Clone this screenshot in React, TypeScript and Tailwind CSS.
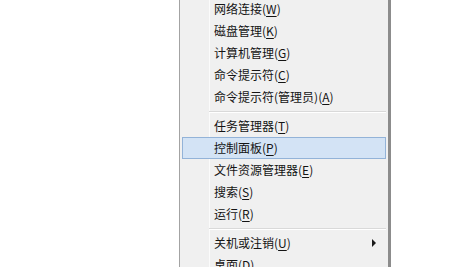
type MenuItem = {
    label: string;
    key: string;
    active?: boolean;
    submenu?: boolean;
};

type Entry = MenuItem | 'sep';

const entries: Entry[] = [
    { label: '网络连接', key: 'W' },
    { label: '磁盘管理', key: 'K' },
    { label: '计算机管理', key: 'G' },
    { label: '命令提示符', key: 'C' },
    { label: '命令提示符(管理员)', key: 'A' },
    'sep',
    { label: '任务管理器', key: 'T' },
    { label: '控制面板', key: 'P', active: true },
    { label: '文件资源管理器', key: 'E' },
    { label: '搜索', key: 'S' },
    { label: '运行', key: 'R' },
    'sep',
    { label: '关机或注销', key: 'U', submenu: true },
    { label: '桌面', key: 'D' },
];

const Row = ({ item }: { item: MenuItem }) => {
    return (
        <div
            className={
                item.active
                    ? 'flex h-[22px] items-center border border-[#93b3d8] bg-[#d3e3f5] pl-[31px]'
                    : 'flex h-[22px] items-center border border-transparent pl-[31px]'
            }
        >
            <span className="whitespace-nowrap text-[12px] leading-none text-[#141414]">
                {item.label}(<span className="underline underline-offset-2">{item.key}</span>)
            </span>
            {item.submenu && (
                <span className="ml-auto mr-[9px] h-0 w-0 border-y-[4px] border-l-[4px] border-y-transparent border-l-[#1a1a1a]" />
            )}
        </div>
    );
};

export default function App() {
    return (
        <div
            className="flex h-[267px] w-[466px] overflow-hidden bg-white"
            style={{ fontFamily: '"Noto Sans CJK SC", "Noto Sans", sans-serif' }}
        >
            <div className="w-[179px] shrink-0" />
            <div className="relative -mt-[2px] w-[212px] shrink-0 self-start border-l border-r-[3px] border-l-[#a3a3a3] border-r-[#8c8c8c] bg-[#f0f0f0] px-[2px] pb-[20px]">
                <div className="absolute inset-y-0 left-[29px] w-px bg-[#fbfbfb]" />
                <div className="relative">
                    {entries.map((entry, i) =>
                        entry === 'sep' ? (
                            <div key={i} className="h-[7px] pt-[3px] pl-[27px]">
                                <div className="h-px bg-[#d9d9d9]" />
                                <div className="h-px bg-white" />
                            </div>
                        ) : (
                            <Row key={i} item={entry} />
                        ),
                    )}
                </div>
            </div>
        </div>
    );
}
